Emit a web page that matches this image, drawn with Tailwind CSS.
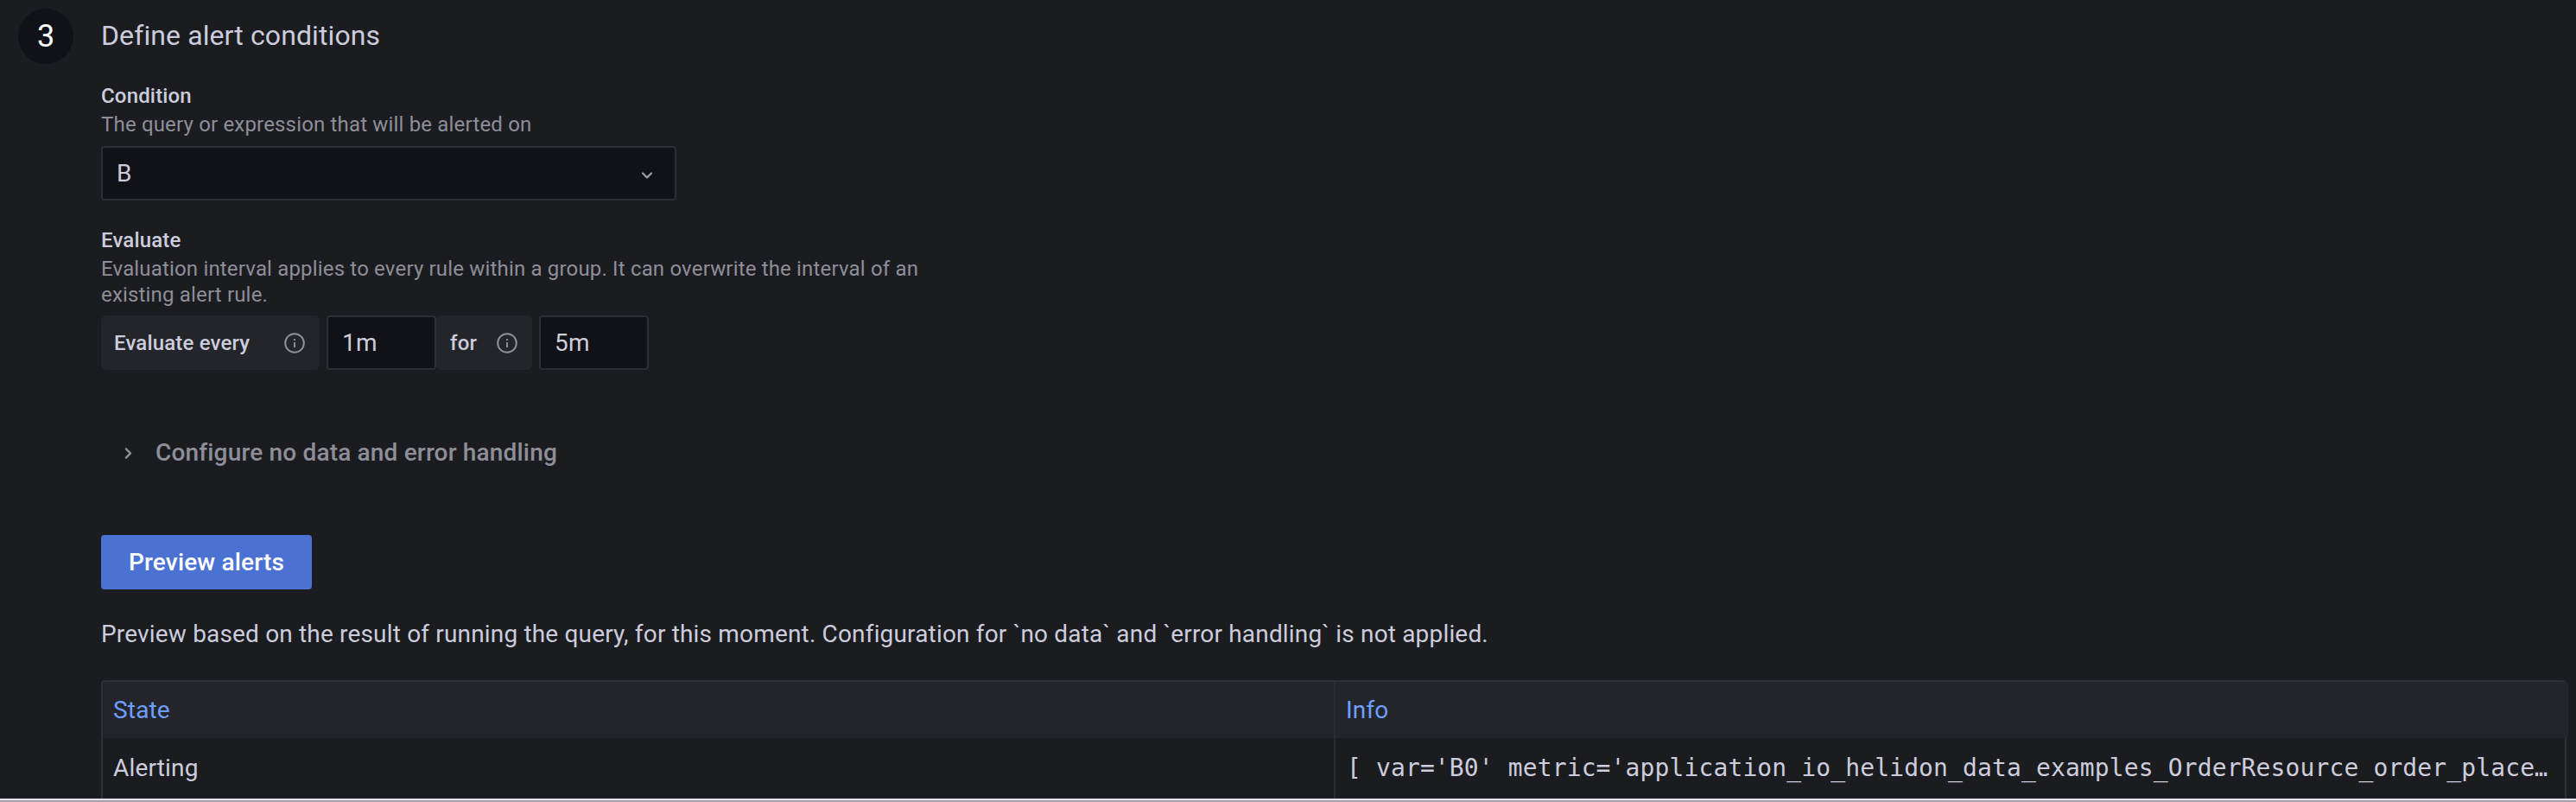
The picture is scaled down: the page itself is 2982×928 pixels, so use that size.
<!DOCTYPE html>
<html lang="en">
<head>
<meta charset="utf-8">
<title>Define alert conditions</title>
<script src="https://cdn.jsdelivr.net/npm/@tailwindcss/browser@4"></script>
</head>
<body class="flex h-[928px] w-[2982px] flex-col overflow-hidden bg-[#1b1c20] font-['Roboto',sans-serif] text-[28px] tracking-[0.17px] text-[#ccccdc]">
<main class="flex h-[924px] shrink-0 items-start overflow-hidden pl-[21px] pt-[10px]">
  <div class="mr-8 flex size-16 shrink-0 items-center justify-center rounded-full bg-[#111217] pb-px text-[36px] tracking-normal text-white">3</div>
  <section class="flex w-[2854px] shrink-0 flex-col items-start">
    <h2 class="mt-[11px] h-10 text-[32px] leading-10 tracking-[0.1px]">Define alert conditions</h2>

    <label class="mt-[35px] h-[30px] text-[24px] font-medium leading-[30px]">Condition</label>
    <p class="mt-[3px] h-[30px] text-[24px] leading-[30px] text-[#8e8e99]">The query or expression that will be alerted on</p>
    <div class="mt-[10px] flex h-[63px] w-[666px] items-center justify-between rounded-[4px] border-2 border-[#2d2e35] bg-[#111217] pl-4 pr-[18px]">
      <span>B</span>
      <svg class="mt-1 size-7" viewBox="0 0 24 24" fill="#9a9aa6"><path d="M17 9.17a1 1 0 0 0-1.41 0L12 12.71 8.46 9.17a1 1 0 0 0-1.41 0 1 1 0 0 0 0 1.42l4.24 4.24a1 1 0 0 0 1.42 0L17 10.59a1 1 0 0 0 0-1.42Z"/></svg>
    </div>

    <label class="mt-[31px] h-[30px] text-[24px] font-medium leading-[30px]">Evaluate</label>
    <p class="mt-[3px] h-[60px] w-[960px] text-[24px] leading-[30px] text-[#8e8e99]">Evaluation interval applies to every rule within a group. It can overwrite the interval of an existing alert rule.</p>
    <div class="mt-[9px] flex h-[63px]">
      <div class="mr-2 flex w-[253px] items-center justify-between rounded-[6px] bg-[#24252a] pl-[15px] pr-[17px] text-[24px] font-medium">
        <span>Evaluate every</span>
        <svg class="size-6" viewBox="0 0 24 24" fill="none" stroke="#8e8e99" stroke-width="2"><circle cx="12" cy="12" r="10.8"/><path d="M12 11v6M12 7v2"/></svg>
      </div>
      <div class="flex w-[127px] items-center rounded-[4px] border-2 border-[#2d2e35] bg-[#111217] pl-4">1m</div>
      <div class="mr-2 flex w-[111px] items-center justify-between rounded-[6px] bg-[#24252a] pl-4 pr-[17px] text-[24px] font-medium">
        <span>for</span>
        <svg class="size-6" viewBox="0 0 24 24" fill="none" stroke="#8e8e99" stroke-width="2"><circle cx="12" cy="12" r="10.8"/><path d="M12 11v6M12 7v2"/></svg>
      </div>
      <div class="flex w-[127px] items-center rounded-[4px] border-2 border-[#2d2e35] bg-[#111217] pl-4">5m</div>
    </div>

    <div class="mt-[76px] flex h-10 items-center pl-[17px] font-medium text-[#8e8e99]">
      <svg class="mr-[17px] size-[29px]" viewBox="0 0 24 24" fill="#8e8e99"><path d="M14.83 11.29 10.59 7.05a1 1 0 0 0-1.42 0 1 1 0 0 0 0 1.41L12.71 12l-3.54 3.54a1 1 0 0 0 0 1.41 1 1 0 0 0 .71.29 1 1 0 0 0 .71-.29l4.24-4.24a1 1 0 0 0 0-1.42Z"/></svg>
      <span>Configure no data and error handling</span>
    </div>

    <button class="mt-[75px] h-[63px] w-[244px] rounded-[4px] bg-[#4b72d3] font-medium tracking-[0.17px] text-white">Preview alerts</button>
    <p class="mt-8 h-10 leading-10">Preview based on the result of running the query, for this moment. Configuration for `no data` and `error handling` is not applied.</p>

    <div class="mt-[33px] h-[150px] w-full rounded-t-[4px] border-x-2 border-t-2 border-[#2f3035]">
      <div class="flex h-[65px] w-[2854px] items-center rounded-tr-[4px] bg-[#24252a] text-[#6e9fff]">
        <div class="flex h-full w-[1427px] items-center border-r-2 border-[#2d2e33] pl-3">State</div>
        <div class="pl-3">Info</div>
      </div>
      <div class="flex h-[84px]">
        <div class="h-full w-[1427px] border-r-2 border-[#2a2b30] pl-3 leading-[69px]">Alerting</div>
        <pre class="pl-[13px] font-['DejaVu_Sans_Mono',monospace] leading-[69px] tracking-[0.12px]">[ var='B0' metric='application_io_helidon_data_examples_OrderResource_order_place<span class="inline-block origin-left scale-x-[0.9]">…</span></pre>
      </div>
    </div>
  </section>
</main>
<div class="h-1 shrink-0 border-t-2 border-[#e4e2e6] bg-[#a8a4ae]"></div>
</body>
</html>
